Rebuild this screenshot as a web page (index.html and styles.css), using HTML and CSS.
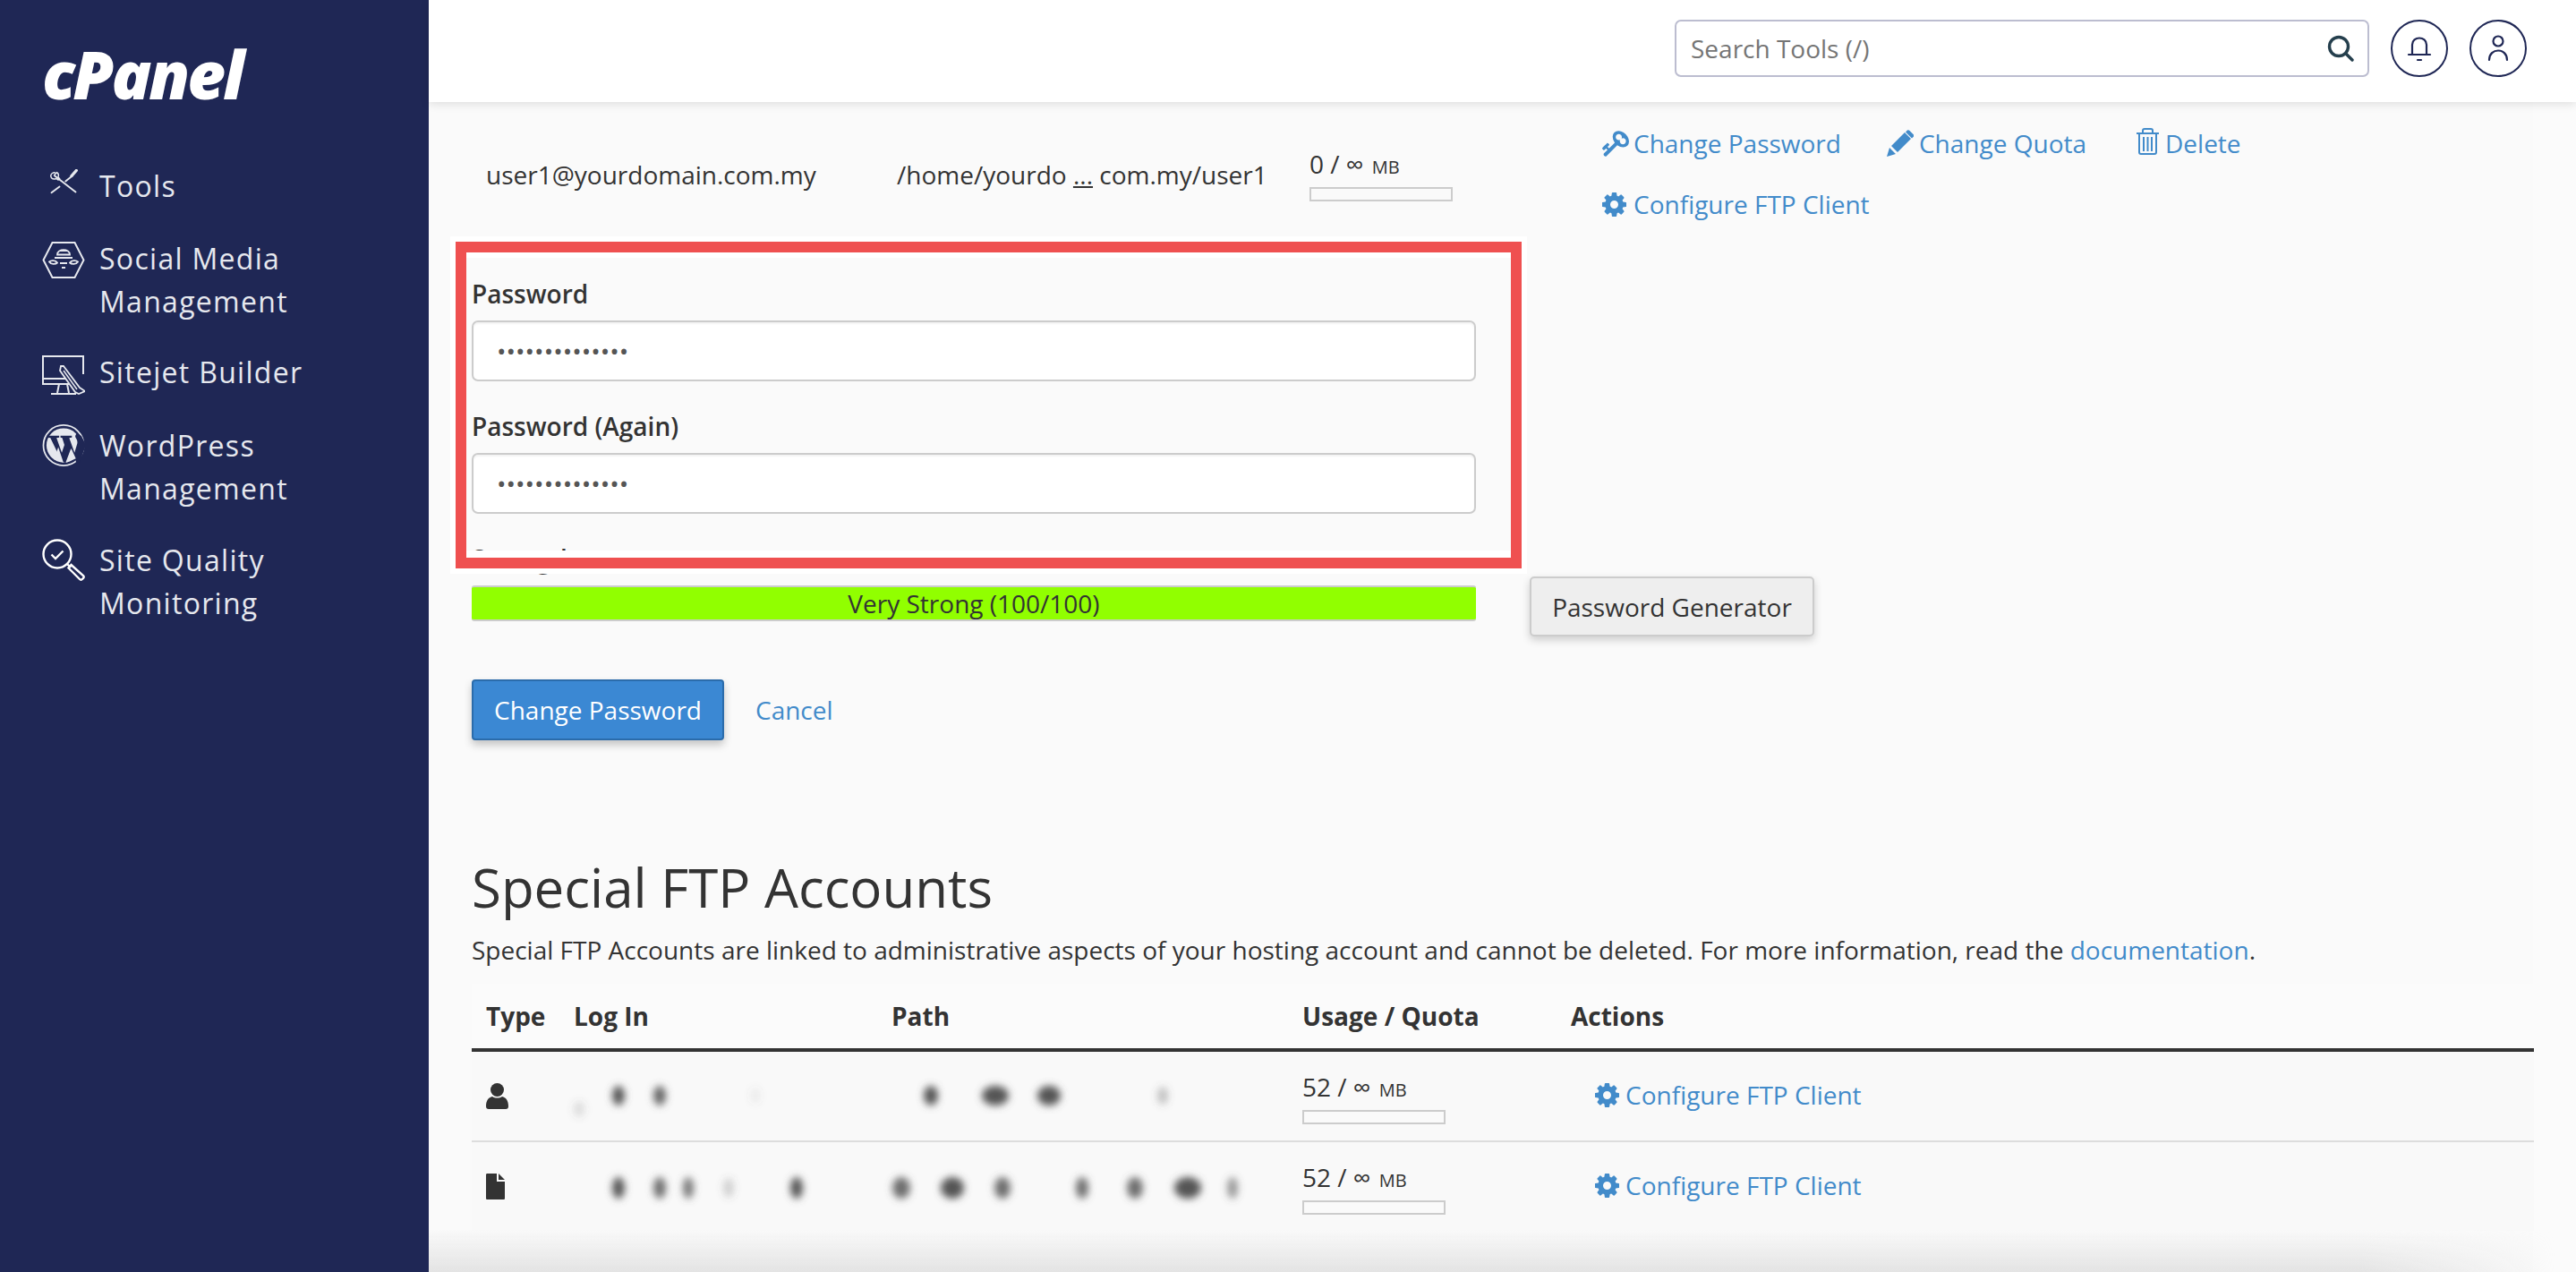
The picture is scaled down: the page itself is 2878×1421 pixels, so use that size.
FILE: index.html
```html
<!DOCTYPE html>
<html lang="en">
<head>
<meta charset="utf-8">
<title>cPanel FTP Accounts</title>
<link rel="stylesheet" href="styles.css">
</head>
<body>
<svg class="defs" width="0" height="0" aria-hidden="true">
  <defs>
    <filter id="smear" x="-20%" y="-60%" width="140%" height="220%"><feGaussianBlur stdDeviation="4.5"/></filter>
    <path id="gear" d="M1152 896q0-106-75-181t-181-75-181 75-75 181 75 181 181 75 181-75 75-181zm512-109v222q0 12-8 23t-20 13l-185 28q-19 54-39 91 35 50 107 138 10 12 10 25t-9 23q-27 37-99 108t-94 71q-12 0-26-9l-138-108q-44 23-91 38-16 136-29 186-7 28-36 28h-222q-14 0-24.500-8.500t-11.500-21.500l-28-184q-49-16-90-37l-141 107q-10 9-25 9-14 0-25-11-126-114-165-168-7-10-7-23 0-12 8-23 15-21 51-66.500t54-70.500q-27-50-41-99l-183-27q-13-2-21-12.500t-8-23.500v-222q0-12 8-23t19-13l186-28q14-46 39-92-40-57-107-138-10-12-10-24 0-10 9-23 26-36 98.500-107.500t94.500-71.500q13 0 26 10l138 107q44-23 91-38 16-136 29-186 7-28 36-28h222q14 0 24.500 8.500t11.500 21.500l28 184q49 16 90 37l142-107q9-9 24-9 13 0 25 10 129 119 165 170 7 8 7 22 0 12-8 23-15 21-51 66.500t-54 70.500q26 50 41 98l183 28q13 2 21 12.500t8 23.500z"/>
  </defs>
</svg>

<aside class="sidebar">
  <div class="logo">cPanel</div>
  <nav class="nav">
    <a class="nav-item nav-tools">
      <svg class="nav-icon" viewBox="0 0 48 48" fill="none" stroke="currentColor" stroke-width="2.600" stroke-linecap="round">
        <path d="M11 10 42 34M6 35 18 26M27 18l10-8"/>
        <path d="M11 5c-3 0-6 2-6 5 0 1 1 3 1 3 2 2 5 2 7 1l3 2 2-2-2-2c1-3 0-6-2-7l-4 4" stroke-width="2"/>
        <path d="M36 10 43 2" stroke-width="4.500"/>
      </svg>
      <span>Tools</span>
    </a>
    <a class="nav-item nav-social">
      <svg class="nav-icon" viewBox="0 0 48 41" fill="none" stroke="currentColor" stroke-width="2">
        <path d="M1.500 20.500 11.500 1h25l10 19.500-10 19.500h-25z"/>
        <path d="M17 14.500c0-7 14-7 14 0zM20 10h8M14 18h20M17 23.500c-2-3-7-3-9-1 2 3 7 3 9 1zM31 23.500c2-3 7-3 9-1-2 3-7 3-9 1zM20 24h8M22 29h4" stroke-width="1.800"/>
      </svg>
      <span>Social Media<br>Management</span>
    </a>
    <a class="nav-item nav-sitejet">
      <svg class="nav-icon" viewBox="0 0 48 45" fill="none" stroke="currentColor" stroke-width="2">
        <path d="M46 21V1H1v31h30M1 26h26M19 32l-2 10M28 32l2 10M10 43h28"/>
        <path d="M24 12 42 36l6 4-7 3-4-2-17-24 1-5z" fill="#1f2755" stroke-width="1.800"/>
        <path d="M24 17 39 38" stroke-width="1.500"/>
      </svg>
      <span>Sitejet Builder</span>
    </a>
    <a class="nav-item nav-wp">
      <svg class="nav-icon" viewBox="0 0 48 48">
        <circle cx="24" cy="24" r="23" fill="none" stroke="currentColor" stroke-width="1.800"/>
        <circle cx="24" cy="24" r="19.500" fill="currentColor"/>
        <path d="M6 13h13v2l-3 .5 6 17 3-9-2.500-8-2-.5v-2h13v2l-3 .5 6 17 3-10c1-4-1-6-2-8-.500-2 1-4 3-4l4 3 5 10-7 20h-4l-6-16-6 16h-4L9 15.500 6 15z" fill="#1f2755"/>
        <path d="M13 40 18 26l6 18zM27 44l6-16 5 11z" fill="currentColor"/>
      </svg>
      <span>WordPress<br>Management</span>
    </a>
    <a class="nav-item nav-quality">
      <svg class="nav-icon" viewBox="0 0 48 48" fill="none" stroke="#fff" stroke-width="2.400">
        <circle cx="17" cy="17" r="15.500"/>
        <path d="M10.500 17.500 15 22l8.500-8.500" stroke-width="2.400"/>
        <path d="M28 28l4 4M32.500 29 46 41c2 2-2 6-4 4L29.500 32.500z"/>
      </svg>
      <span>Site Quality<br>Monitoring</span>
    </a>
  </nav>
</aside>

<div class="main">
  <header class="topbar">
    <div class="search">
      <input class="search-input" type="text" placeholder="Search Tools (/)">
      <svg class="search-icon" viewBox="0 0 30 30" fill="none" stroke="#253f4d" stroke-width="3.400" stroke-linecap="round"><circle cx="13" cy="13" r="10.500"/><path d="M21 21l7 7"/></svg>
    </div>
    <button class="round-btn" type="button" aria-label="Notifications">
      <svg class="round-icon" viewBox="0 0 30 30" fill="none" stroke="#1f2755" stroke-width="2.200" stroke-linecap="round"><path d="M7 21V11c0-10 16-10 16 0v10M3 22h24"/><path d="M13 28h4"/></svg>
    </button>
    <button class="round-btn" type="button" aria-label="Account">
      <svg class="round-icon" viewBox="0 0 30 30" fill="none" stroke="#1f2755" stroke-width="2.200" stroke-linecap="round"><circle cx="15" cy="7" r="5.500"/><path d="M5 28c0-14 20-14 20 0"/></svg>
    </button>
  </header>

  <div class="content">
    <section class="account-row">
      <div class="account-user">user1@yourdomain.com.my</div>
      <div class="account-path">/home/yourdo <u>...</u> com.my/user1</div>
      <div class="account-usage">
        <div class="usage-num">0 / ∞ <small>MB</small></div>
        <div class="usage-bar"></div>
      </div>
      <div class="account-actions">
        <div class="action-line">
          <a class="link"><svg class="ic-key" viewBox="0 0 1792 1792"><path transform="matrix(-1 0 0 1 1792 0)" d="M832 512q0-80-56-136t-136-56-136 56-56 136q0 42 19 83-41-19-83-19-80 0-136 56t-56 136 56 136 136 56 136-56 56-136q0-42-19-83 41 19 83 19 80 0 136-56t56-136zm851 704q0 17-49 66t-66 49q-9 0-28.500-16t-36.500-33-38.500-40-24.500-26l-96 96 220 220q28 28 28 68 0 42-39 81t-81 39q-40 0-68-28l-671-671q-176 131-365 131-163 0-265.500-102.500t-102.500-265.500q0-160 95-313t248-248 313-95q163 0 265.500 102.500t102.500 265.500q0 189-131 365l355 355 96-96q-3-3-26-24.500t-40-38.500-33-36.500-16-28.500q0-17 49-66t66-49q13 0 23 10 6 6 46 44.500t82 79.500 86.500 86 73 78 28.500 41z"/></svg>Change Password</a>
          <a class="link link-quota"><svg class="ic-pencil" viewBox="0 0 30 30"><path d="M0 30 3 20l7 7zM5 18 20 3l7 7L12 25zM22 1.500c1-1.500 2.500-1.500 3.500-.5l4 4c1 1 1 2.500-.5 3.500l-1 1-7-7z"/></svg>Change Quota</a>
          <a class="link link-delete"><svg class="ic-trash" viewBox="0 0 25 30" fill="none" stroke="currentColor" stroke-width="2"><path d="M0 6h25M7 6V3q0-2 2-2h7q2 0 2 2v3M3 6v21q0 2 2 2h15q2 0 2-2V6M8 10v16M12.500 10v16M17 10v16"/></svg>Delete</a>
        </div>
        <div class="action-line">
          <a class="link link-cfg"><svg class="ic-gear" viewBox="128 128 1536 1536"><use href="#gear"/></svg>Configure FTP Client</a>
        </div>
      </div>
    </section>

    <form class="pw-form">
      <label class="field-label">Password</label>
      <input class="pw-input" type="password" value="abcdefghijklmn">
      <label class="field-label">Password (Again)</label>
      <input class="pw-input" type="password" value="abcdefghijklmn">
      <label class="field-label">Strength</label>
      <div class="strength-row">
        <div class="strength-bar">Very Strong (100/100)</div>
        <button class="gen-btn" type="button">Password Generator</button>
      </div>
      <div class="submit-row">
        <button class="primary-btn" type="button">Change Password</button>
        <a class="link">Cancel</a>
      </div>
      <div class="annotation" aria-hidden="true"></div>
    </form>

    <section class="special">
      <h2 class="special-title">Special FTP Accounts</h2>
      <p class="special-desc">Special FTP Accounts are linked to administrative aspects of your hosting account and cannot be deleted. For more information, read the <a class="link">documentation</a>.</p>
      <table class="ftp-table">
        <colgroup><col class="col-type"><col class="col-login"><col class="col-path"><col class="col-usage"><col></colgroup>
        <thead>
          <tr><th>Type</th><th>Log In</th><th>Path</th><th>Usage / Quota</th><th>Actions</th></tr>
        </thead>
        <tbody>
          <tr>
            <td><svg class="ic-user" viewBox="0 0 25 29"><ellipse cx="12.500" cy="7.500" rx="7.500" ry="7.500"/><path d="M0 26c0-7 3-10 7-11 3 2 8 2 11 0 4 1 7 4 7 11 0 2-1 3-3 3H3c-2 0-3-1-3-3z"/></svg></td>
            <td class="blur-cell"><svg class="smear" width="340" height="80"><g filter="url(#smear)" fill="#555"><ellipse cx="66" cy="39" rx="7" ry="11"/><ellipse cx="112" cy="39" rx="7" ry="11" opacity=".9"/><ellipse cx="219" cy="39" rx="5" ry="9" opacity=".1"/><ellipse cx="22" cy="54" rx="6" ry="9" opacity=".18"/></g></svg></td>
            <td class="blur-cell"><svg class="smear" width="440" height="80"><g filter="url(#smear)" fill="#555"><ellipse cx="60" cy="39" rx="8" ry="11"/><ellipse cx="132" cy="39" rx="15" ry="11"/><ellipse cx="192" cy="39" rx="13" ry="11"/><ellipse cx="319" cy="39" rx="6" ry="10" opacity=".35"/></g></svg></td>
            <td><div class="usage-num">52 / ∞ <small>MB</small></div><div class="usage-bar"></div></td>
            <td><a class="link link-tbl"><svg class="ic-gear" viewBox="128 128 1536 1536"><use href="#gear"/></svg>Configure FTP Client</a></td>
          </tr>
          <tr>
            <td><svg class="ic-file" viewBox="0 0 21 29"><path d="M0 1.500C0 .500.500 0 1.500 0H12v9h9v18.500c0 1-.500 1.500-1.500 1.500h-18C.500 29 0 28.500 0 27.500zM14 0l7 7h-7z"/></svg></td>
            <td class="blur-cell"><svg class="smear" width="340" height="80"><g filter="url(#smear)" fill="#555"><ellipse cx="66" cy="41" rx="7" ry="12"/><ellipse cx="112" cy="41" rx="7" ry="12" opacity=".85"/><ellipse cx="144" cy="41" rx="6" ry="12" opacity=".8"/><ellipse cx="189" cy="41" rx="6" ry="11" opacity=".25"/><ellipse cx="265" cy="41" rx="7" ry="12"/></g></svg></td>
            <td class="blur-cell"><svg class="smear" width="440" height="80"><g filter="url(#smear)" fill="#555"><ellipse cx="27" cy="41" rx="10" ry="12" opacity=".85"/><ellipse cx="84" cy="41" rx="13" ry="12"/><ellipse cx="140" cy="41" rx="9" ry="12" opacity=".85"/><ellipse cx="229" cy="41" rx="7" ry="12" opacity=".85"/><ellipse cx="288" cy="41" rx="9" ry="12" opacity=".85"/><ellipse cx="347" cy="41" rx="15" ry="12"/><ellipse cx="397" cy="41" rx="6" ry="12" opacity=".6"/></g></svg></td>
            <td><div class="usage-num">52 / ∞ <small>MB</small></div><div class="usage-bar"></div></td>
            <td><a class="link link-tbl"><svg class="ic-gear" viewBox="128 128 1536 1536"><use href="#gear"/></svg>Configure FTP Client</a></td>
          </tr>
        </tbody>
      </table>
    </section>
  </div>
</div>
```

FILE: styles.css
```css
* { box-sizing: border-box; }

html, body {
  margin: 0;
  height: 1421px;
  overflow: hidden;
}

body {
  display: flex;
  font-family: "Open Sans", "Liberation Sans", sans-serif;
  font-size: 28px;
  line-height: 40px;
  color: #333;
  background: #fbfbfb;
}

.defs { position: absolute; }

/* sidebar */
.sidebar {
  flex: 0 0 479px;
  background: #1f2755;
  color: #e6e8ee;
  padding: 46px 0 0 47px;
}

.logo {
  font-family: "Open Sans", sans-serif;
  font-weight: 800;
  font-style: italic;
  font-size: 74px;
  line-height: 74px;
  letter-spacing: -3px;
  color: #fff;
}

.nav { display: flex; flex-direction: column; margin-top: 64px; }

.nav-item {
  display: flex;
  align-items: flex-start;
  font-size: 32px;
  line-height: 48px;
  letter-spacing: 1.3px;
}

.nav-item span { margin-left: 16px; }

.nav-icon { flex: none; width: 48px; color: #e6e8ee; }

.nav-tools { margin-bottom: 33px; }
.nav-tools .nav-icon { height: 36px; margin-top: 5px; }
.nav-social { margin-bottom: 31px; }
.nav-social .nav-icon { height: 41px; margin-top: 5px; }
.nav-sitejet { margin-bottom: 32px; }
.nav-sitejet .nav-icon { height: 45px; margin-top: 5px; }
.nav-wp { margin-bottom: 32px; }
.nav-wp .nav-icon { height: 47px; }
.nav-quality .nav-icon { height: 48px; }

/* main */
.main {
  flex: 1;
  min-width: 0;
  display: flex;
  flex-direction: column;
  position: relative;
}

.main::after {
  content: "";
  position: absolute;
  left: 0;
  right: 0;
  bottom: 0;
  height: 48px;
  background: linear-gradient(to bottom, rgba(225,225,225,0), rgba(225,225,225,.9));
  -webkit-mask-image: linear-gradient(to right, #000 90%, transparent 99%);
  mask-image: linear-gradient(to right, #000 90%, transparent 99%);
  pointer-events: none;
}

.topbar {
  flex: 0 0 114px;
  display: flex;
  align-items: flex-start;
  justify-content: flex-end;
  gap: 24px;
  padding: 22px 55px 0 0;
  background: #fff;
  box-shadow: 0 2px 10px rgba(0,0,0,.12);
  position: relative;
  z-index: 2;
}

.search {
  width: 776px;
  height: 64px;
  margin-right: 0;
  display: flex;
  align-items: center;
  border: 2px solid #bcbdd0;
  border-radius: 7px;
  padding: 0 15px 0 16px;
  background: #fff;
}

.search-input {
  flex: 1;
  min-width: 0;
  border: 0;
  outline: 0;
  padding: 0;
  background: none;
  font: 400 28px/40px "Open Sans", sans-serif;
  color: #757575;
}

.search-input::placeholder { color: #757575; opacity: 1; }

.search-icon { width: 30px; height: 30px; flex: none; }

.round-btn {
  width: 64px;
  height: 64px;
  padding: 0;
  display: flex;
  align-items: center;
  justify-content: center;
  border: 2px solid #1f2755;
  border-radius: 50%;
  background: #fff;
}

.round-icon { width: 30px; height: 30px; }

.content {
  flex: 1;
  min-height: 0;
  width: 2351px;
  padding-left: 48px;
  padding-right: 0;
  background: #fafafa;
}

/* account row */
.account-row {
  display: grid;
  grid-template-columns: 459px 461px 325px 1fr;
  padding: 26px 0 0 16px;
  height: 194px;
}

.account-user, .account-path { margin-top: 35px; white-space: nowrap; }
.account-usage { margin-top: 23px; }

.usage-num { height: 40px; white-space: nowrap; }
.usage-num small { font-size: 20px; margin-left: 2px; }

.usage-bar {
  width: 160px;
  height: 16px;
  margin-top: 6px;
  border: 2px solid #ccc;
  background: #fafafa;
}

.action-line {
  display: flex;
  align-items: center;
  gap: 51px;
  height: 40px;
  margin-bottom: 28px;
  white-space: nowrap;
}

.link {
  color: #428bca;
  text-decoration: none;
}

.action-line .link, .link-tbl {
  display: inline-flex;
  align-items: center;
}

.link svg { fill: currentColor; flex: none; }

.ic-key { width: 32px; height: 32px; margin-right: 5px; margin-top: 0; }
.ic-pencil { width: 30px; height: 30px; margin-right: 6px; }
.ic-trash { width: 25px; height: 30px; margin-right: 7px; margin-top: -4px; }
.ic-trash { fill: none !important; }
.ic-gear { width: 27px; height: 27px; margin-right: 7px; }
.link-delete { margin-left: 5px; }
.link-cfg { margin-left: 2px; }
.link-cfg .ic-gear { margin-right: 8px; }
.link-tbl { margin-left: 27px; }

/* form */
.pw-form { position: relative; width: 1122px; }

.field-label {
  display: block;
  font-weight: 600;
  height: 40px;
  line-height: 40px;
  margin-bottom: 10px;
}

.pw-input {
  display: block;
  width: 100%;
  height: 68px;
  margin-bottom: 30px;
  padding: 0 26px;
  border: 2px solid #ccc;
  border-radius: 7px;
  background: #fff;
  box-shadow: inset 0 2px 2px rgba(0,0,0,.05);
  outline: 0;
  font: 400 28px/40px "Open Sans", sans-serif;
  color: #555;
}

.strength-row {
  display: flex;
  align-items: flex-start;
  width: 1500px;
}

.strength-bar {
  flex: 0 0 1122px;
  height: 40px;
  border-top: 2px solid #ccc;
  border-bottom: 2px solid #ccc;
  border-radius: 3px;
  background: #91ff00;
  color: #333;
  font-size: 28px;
  line-height: 36px;
  text-align: center;
}

.gen-btn {
  height: 67px;
  width: 318px;
  margin: -10px 0 0 60px;
  padding: 0;
  border: 2px solid #ccc;
  border-radius: 5px;
  background: #eee;
  box-shadow: 0 4px 10px rgba(0,0,0,.18);
  font: 400 28px/40px "Open Sans", sans-serif;
  color: #333;
}

.submit-row {
  display: flex;
  align-items: center;
  gap: 35px;
  margin-top: 48px;
}

.primary-btn {
  width: 282px;
  height: 68px;
  padding: 0;
  border: 2px solid #2b6cab;
  border-radius: 4px;
  background: #3b88d3;
  box-shadow: 0 5px 10px rgba(0,0,0,.22);
  font: 400 28px/40px "Open Sans", sans-serif;
  color: #fff;
}

.annotation {
  position: absolute;
  left: -18px;
  top: -38px;
  width: 1191px;
  height: 365px;
  border: 12px solid #ef5050;
  box-shadow: 0 0 0 6px #fff, inset 0 6px 0 #fff, inset 0 -8px 0 #fff;
  pointer-events: none;
}

/* special accounts */
.special { width: 2304px; }

.special-title {
  margin: 120px 0 0;
  font-size: 60px;
  font-weight: 400;
  line-height: 88px;
}

.special-desc { margin: 6px 0 0; line-height: 40px; white-space: nowrap; }

.ftp-table {
  width: 100%;
  margin-top: 18px;
  border-collapse: collapse;
  table-layout: fixed;
  background: #f9f9f9;
}

.col-type { width: 98px; }
.col-login { width: 355px; }
.col-path { width: 459px; }
.col-usage { width: 300px; }

.ftp-table th {
  height: 74px;
  padding: 0 0 0 16px;
  border-bottom: 4px solid #333;
  text-align: left;
  font-weight: 700;
  background: #fbfbfb;
}

.ftp-table td {
  height: 102px;
  padding: 0 0 0 16px;
  border-bottom: 2px solid #ddd;
  vertical-align: middle;
}

.ftp-table tr:last-child td { border-bottom: 0; height: 100px; }

.ftp-table td.blur-cell { padding: 0; }

.smear { display: block; }

.ic-user { width: 25px; height: 29px; display: block; fill: #333; }
.ic-file { width: 21px; height: 29px; display: block; fill: #333; }
```
